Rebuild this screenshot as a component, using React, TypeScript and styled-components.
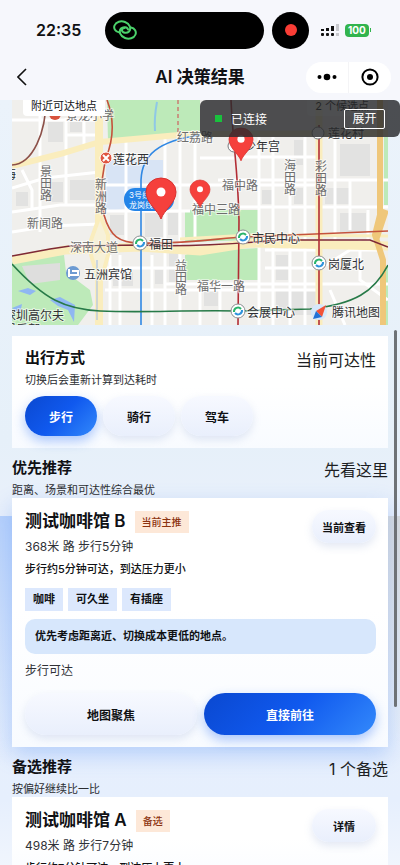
import React, { useState } from "react";
import styled, { createGlobalStyle, css } from "styled-components";

const GlobalStyle = createGlobalStyle`
  * { box-sizing: border-box; }
  body {
    margin: 0;
    color: #101114;
    font-family: Inter, "Noto Sans CJK SC", sans-serif;
    -webkit-font-smoothing: antialiased;
  }
  button { font-family: inherit; cursor: pointer; }
  h1, h2, h3, p, ul { margin: 0; padding: 0; }
`;

const Screen = styled.div`
  position: relative;
  display: flex;
  flex-direction: column;
  height: 100vh;
  overflow: hidden;
  background: #ebf3fb;
`;

const Header = styled.header`
  flex: none;
  background: #f6f7fc;
`;

const StatusBar = styled.div`
  display: grid;
  grid-template-columns: 105fr 159px 136fr;
  align-items: center;
  height: 60px;
`;

const Clock = styled.time`
  padding-left: 36px;
  font-size: 16px;
  font-weight: 600;
`;

const Island = styled.div`
  display: flex;
  align-items: center;
  height: 37px;
  padding-left: 8px;
  border-radius: 19px;
  background: #000;
`;

const StatusRight = styled.div`
  display: flex;
  align-items: center;
  padding-left: 8px;
`;

const Recording = styled.span`
  display: grid;
  place-items: center;
  width: 37px;
  height: 37px;
  border-radius: 50%;
  background: #000;
  &::after {
    content: "";
    width: 12px;
    height: 12px;
    border-radius: 50%;
    background: #fa3d35;
  }
`;

const Signal = styled.svg`
  width: 19px;
  height: 13px;
  margin-left: 12px;
`;

const Battery = styled.span`
  display: flex;
  align-items: center;
  margin-left: 5px;
  height: 13px;
  padding: 0 3px;
  border-radius: 4px;
  background: #32b44e;
  color: #fff;
  font-size: 10px;
  font-weight: 700;
`;

const BatteryCap = styled.span`
  width: 1px;
  height: 4px;
  margin-left: 1px;
  background: #32b44e;
`;

const NavBar = styled.div`
  display: grid;
  grid-template-columns: 1fr auto 1fr;
  align-items: center;
  height: 40px;
  padding: 0 9px 6px;
`;

const IconButton = styled.button`
  display: grid;
  place-items: center;
  width: 26px;
  height: 24px;
  padding: 0;
  border: 0;
  background: none;
`;

const NavTitle = styled.h1`
  font-size: 17px;
  line-height: 24px;
  font-weight: 600;
`;

const Capsule = styled.div`
  justify-self: end;
  display: flex;
  width: 85px;
  height: 31px;
  border-radius: 16px;
  background: #fff;
  button {
    flex: 1;
    height: 31px;
  }
  button + button {
    border-left: 1px solid #f4f4f6;
  }
`;

const Content = styled.main`
  flex: 1;
  min-height: 0;
  overflow: hidden;
  padding: 0 12px;
  background:
    linear-gradient(#b7d1fb, #b7d1fb00) left 416px / 12px 250px no-repeat,
    linear-gradient(#d9dbdc, #d9dbdc00) right 416px / 12px 230px no-repeat,
    linear-gradient(#ebf3fb 0, #e6f0f9 340px, #e9f0fb 416px, #e6effd 700px, #f0f5fd 765px);
`;

const MapBox = styled.section`
  position: relative;
  overflow: hidden;
  height: 225px;
  margin-bottom: 11px;
  svg {
    display: block;
    width: 100%;
    height: 100%;
  }
`;

const MapChip = styled.span<{ $side: "left" | "right" }>`
  position: absolute;
  top: -4px;
  ${(p) => (p.$side === "left" ? "left: 11px;" : "right: 11px;")}
  padding: 0 8px;
  border-radius: 4px;
  background: ${(p) => (p.$side === "left" ? "#fff" : "rgba(255, 255, 255, 0.5)")};
  font-size: 11px;
  line-height: 20px;
`;

const Toast = styled.div`
  position: absolute;
  top: 100px;
  right: 0;
  display: flex;
  align-items: center;
  width: 50%;
  height: 37px;
  padding: 0 15px;
  border-radius: 6px;
  background: rgba(40, 42, 44, 0.82);
  color: #fff;
  font-size: 12px;
`;

const ToastDot = styled.span`
  width: 7px;
  height: 7px;
  margin-right: 9px;
  background: #19c13d;
`;

const ToastButton = styled.button`
  width: 41px;
  height: 20px;
  margin-left: auto;
  padding: 0;
  border: 1px solid #fff;
  border-radius: 2px;
  background: none;
  color: #fff;
  font-size: 12px;
  line-height: 16px;
`;

const ScrollThumb = styled.div`
  position: absolute;
  top: 330px;
  right: 3px;
  width: 3px;
  height: 377px;
  border-radius: 2px;
  background: #6e7276;
`;

const Card = styled.article<{ $glow?: boolean }>`
  padding: 12px 12px 12px 13px;
  background: linear-gradient(#fff 0, #fff 45%, #f8fbff 100%);
  ${(p) =>
    p.$glow &&
    css`
      box-shadow: 0 8px 20px rgba(77, 139, 245, 0.32);
    `}
`;

const Heading = styled.div`
  display: flex;
  justify-content: space-between;
  align-items: flex-start;
`;

const SectionHeading = styled(Heading)`
  position: relative;
  padding-top: 10px;
  height: 50px;
`;

const SectionTitle = styled.h2`
  font-size: 15px;
  line-height: 20px;
  font-weight: 600;
`;

const SectionNote = styled.p`
  font-size: 11px;
  line-height: 16px;
  margin-top: 4px;
  color: #2b2d31;
`;

const SectionSide = styled.span`
  font-size: 16px;
  line-height: 24px;
  color: #1d1f23;
`;

const Modes = styled.div`
  display: flex;
  gap: 6px;
  margin-top: 8px;
`;

const Pill = styled.button<{ $primary?: boolean; $size?: "small" | "mode" | "wide" }>`
  border: 0;
  padding: 0;
  border-radius: 21px;
  font-weight: 600;
  font-size: 12px;
  color: #101114;
  background: linear-gradient(#f7f9ff, #e9effc);
  box-shadow: 0 4px 8px rgba(120, 145, 200, 0.2);
  ${(p) => p.$size === "mode" && "width: 72px; height: 40px;"}
  ${(p) => p.$size === "wide" && "flex: 1; height: 42px;"}
  ${(p) => p.$size === "small" && "flex: none; width: 64px; height: 33px; font-size: 11px;"}
  ${(p) =>
    p.$primary &&
    css`
      color: #fff;
      background: linear-gradient(135deg, #0a48d0 0%, #1059ee 50%, #3389fb 100%);
      box-shadow: 0 5px 12px rgba(40, 110, 245, 0.38);
    `}
`;

const PlaceHead = styled.div`
  display: flex;
  justify-content: space-between;
  height: 27px;
`;

const PlaceName = styled.div`
  display: flex;
  align-items: center;
  gap: 9px;
  height: 23px;
`;

const PlaceTitle = styled.h3`
  font-size: 17px;
  line-height: 23px;
  font-weight: 600;
`;

const Badge = styled.span`
  padding: 0 7px;
  background: #fde8d8;
  color: #8c3310;
  font-size: 10px;
  line-height: 22px;
  font-weight: 500;
`;

const Meta = styled.p`
  font-size: 12px;
  line-height: 20px;
  color: #303237;
`;

const Reason = styled.p`
  margin-top: 3px;
  font-size: 11px;
  line-height: 18px;
  font-weight: 500;
`;

const Tags = styled.ul`
  display: flex;
  gap: 5px;
  margin-top: 10px;
  list-style: none;
`;

const Tag = styled.li`
  padding: 0 8px;
  background: #dce8fd;
  font-size: 11px;
  line-height: 23px;
  font-weight: 600;
`;

const Tip = styled.p`
  margin: 8px 0 7px;
  padding: 0 10px;
  border-radius: 10px;
  background: #d7e7fc;
  font-size: 11px;
  line-height: 35px;
  font-weight: 600;
`;

const Actions = styled.div`
  display: flex;
  gap: 7px;
  margin-top: 12px;
`;

const roads = [
  "M12 120H100", "M12 188L45 178L100 172", "M12 212L60 205H105", "M40 115V232", "M66 118V205",
  "M84 118V150", "M66 135H98", "M12 232L50 226L100 224", "M22 170L32 190V210", "M105 185H320",
  "M105 211H190", "M126 140V240", "M165 135V325", "M180 135V325", "M195 135V240",
  "M259 137V325", "M273 137V325", "M290 170V325", "M305 137V325", "M200 158H235", "M239 157H320",
  "M218 180H388", "M240 207H388", "M335 137V240", "M350 180V230", "M368 210V240",
  "M105 268H185", "M105 290H320", "M165 284H388", "M265 250H320",
  "M265 268H320", "M326 265L350 250H380", "M330 290L345 325", "M360 240V280L388 300",
  "M110 255V325", "M120 255V325", "M152 255V325", "M200 284V325", "M220 284V325",
];

const blocks = [
  [48, 122, 15, 20], [70, 122, 12, 10], [48, 182, 15, 20], [70, 180, 26, 20], [16, 192, 12, 14],
  [110, 215, 14, 20], [145, 213, 18, 24], [168, 213, 10, 22], [169, 252, 9, 30], [155, 270, 8, 14],
  [276, 255, 12, 25], [276, 289, 44, 26], [262, 190, 10, 14], [294, 188, 9, 16], [325, 188, 24, 16],
  [340, 213, 26, 20], [340, 144, 30, 32], [294, 140, 9, 25], [204, 290, 14, 16], [113, 272, 20, 14],
];

type Station = { x: number; y: number; name: string };
const stations: Station[] = [
  { x: 140, y: 243, name: "福田" },
  { x: 243, y: 237, name: "市民中心" },
  { x: 319, y: 263, name: "岗厦北" },
  { x: 238, y: 311, name: "会展中心" },
];

const MapText = styled.text<{ $road?: boolean; $vertical?: boolean }>`
  font-size: 12px;
  fill: ${(p) => (p.$road ? "#6d6d6d" : "#2f3033")};
  stroke: #fff;
  stroke-width: 2px;
  stroke-opacity: 0.6;
  paint-order: stroke;
  ${(p) => p.$vertical && "writing-mode: vertical-rl; text-orientation: upright;"}
`;

const LineText = styled.text`
  font-size: 8px;
  fill: #fff;
`;

function Pin({ x, y, r }: { x: number; y: number; r: number }) {
  const k = r / 15;
  return (
    <g transform={`translate(${x} ${y}) scale(${k})`}>
      <path d="M0 41C-3 32-15 25-15 14A15 14 0 0 1 15 14C15 25 3 32 0 41Z" fill="#f5403c" stroke="#d9302d" strokeWidth="1" />
      <circle cx="0" cy="14" r="4.5" fill="#fff" />
    </g>
  );
}

function CityMap() {
  return (
    <svg viewBox="12 100 376 225" preserveAspectRatio="xMidYMid slice" role="img" aria-label="附近可达地点地图">
      <rect x="12" y="100" width="376" height="225" fill="#f0efec" />
      <path d="M107 100H200V134L160 138L108 141Z" fill="#bdeab9" />
      <path d="M106 160H163V205L106 211Z" fill="#d8e4f5" />
      <path d="M185 210H259V240L185 242ZM196 251L259 248V280H185V255Z" fill="#bdeab9" />
      <path d="M12 262L30 257L64 255L66 272L90 290L93 305L78 325H12Z" fill="#bdeab9" />
      <path d="M22 266L60 263V280L30 284Z" fill="#dededd" />
      <path d="M384 137H388V205H384ZM384 270L388 266V325H384Z" fill="#bdeab9" />
      <path d="M18 291L28 288L36 291L30 295ZM50 300L60 297L75 305L74 322L68 310L58 306ZM12 308L22 304L20 314Z" fill="#8fb7f2" />
      <path d="M157 102Q154 118 155 131" fill="none" stroke="#8fc8e6" strokeWidth="2" />
      {blocks.map(([x, y, w, h]) => (
        <rect key={`${x}-${y}`} x={x} y={y} width={w} height={h} fill="#e2e2e1" />
      ))}
      <g fill="none" stroke="#fff" strokeWidth="3">
        {roads.map((d) => (
          <path key={d} d={d} />
        ))}
      </g>
      <g fill="none" stroke="#faedbd">
        <path d="M12 166L60 154L100 142L190 134L388 133" strokeWidth="6" />
        <path d="M99 100V325" strokeWidth="8" />
        <path d="M100 215L91 240V255L100 285L108 255V235Z" strokeWidth="4" fill="#f7f1d8" />
        <path d="M12 260L65 250L140 247L200 251L250 243L388 246" strokeWidth="9" />
        <path d="M180 239L250 235L388 236" strokeWidth="3" />
        <path d="M319 100V325" strokeWidth="7" />
      </g>
      <path d="M380 100V215L375 235L383 260V325M386 210L376 240" fill="none" stroke="#efc77a" strokeWidth="6" />
      <path d="M97 260V320" stroke="#9fbbe8" strokeWidth="1" />
      <g fill="none" strokeWidth="1.6">
        <path d="M46 100C46 132 33 164 12 165" stroke="#8c5048" />
        <path d="M107 100C114 118 114 138 106 158C101 180 100 200 104 215C110 236 119 243 140 243C190 244 220 238 243 237L388 231" stroke="#c5533c" />
        <path d="M12 256L50 249L70 246L140 245C180 247 235 244 280 240H370L388 247" stroke="#7e2936" />
        <path d="M178 100L178 132" stroke="#c98476" strokeDasharray="4 3" />
        <path d="M200 135C158 141 142 155 141 180V325" stroke="#3088e4" />
        <path d="M231 100C233 145 238 170 239 220L238 325" stroke="#b22d35" />
        <path d="M319 125V325" stroke="#b22d35" />
        <path d="M12 264C45 300 65 309 100 311C145 313 180 310 238 311L310 309C355 304 374 292 388 265" stroke="#277a48" />
      </g>
      <rect x="124" y="188" width="50" height="23" rx="11" fill="#2384e8" />
      <LineText x="129" y="198">3号线</LineText>
      <LineText x="129" y="208">龙岗线</LineText>
      <circle cx="55" cy="114" r="6" fill="#d8523c" />
      <MapText x="66" y="120" $road>景龙小学</MapText>
      <circle cx="106" cy="158" r="6" fill="#df5540" stroke="#fff" />
      <path d="M103 155l6 6m0-6l-6 6" stroke="#fff" strokeWidth="2" />
      <MapText x="113" y="164">莲花西</MapText>
      <MapText x="177" y="142" $road>红荔路</MapText>
      <MapText x="45" y="165" $road $vertical>景田路</MapText>
      <MapText x="100" y="178" $road $vertical>新洲路</MapText>
      <MapText x="289" y="159" $road $vertical>海田路</MapText>
      <MapText x="320" y="160" $road $vertical>彩田路</MapText>
      <MapText x="180" y="259" $road $vertical>益田路</MapText>
      <MapText x="27" y="228" $road>新闻路</MapText>
      <MapText x="70" y="252" $road>深南大道</MapText>
      <MapText x="222" y="190" $road>福中路</MapText>
      <MapText x="192" y="214" $road>福中三路</MapText>
      <MapText x="197" y="291" $road>福华一路</MapText>
      <circle cx="73" cy="273" r="7" fill="#6d9bd2" />
      <path d="M69 277V269M69 275H78V271H72" fill="none" stroke="#fff" strokeWidth="2" />
      <MapText x="84" y="279">五洲宾馆</MapText>
      <MapText x="4" y="320">深圳高尔夫</MapText>
      <MapText x="4" y="334">俱乐部</MapText>
      <MapText x="4" y="179">海</MapText>
      {stations.map((s) => (
        <g key={s.name}>
          <circle cx={s.x} cy={s.y} r="7" fill="#fff" stroke="#8b8f92" />
          <path d={`M${s.x - 4} ${s.y + 1}a4 4 0 0 1 7-3`} fill="none" stroke="#29b46c" strokeWidth="2" />
          <path d={`M${s.x + 4} ${s.y - 1}a4 4 0 0 1-7 3`} fill="none" stroke="#2e93dc" strokeWidth="2" />
          <MapText x={s.x + 9} y={s.y + 6}>{s.name}</MapText>
        </g>
      ))}
      <circle cx="234" cy="146" r="6" fill="#fff" stroke="#777b80" />
      <MapText x="244" y="151">少年宫</MapText>
      <circle cx="318" cy="133" r="6" fill="#fff" stroke="#777b80" />
      <MapText x="328" y="138">莲花村</MapText>
      <Pin x={161} y={178} r={15} />
      <Pin x={200} y={180} r={10} />
      <Pin x={241} y={128} r={12} />
      <circle cx="319" cy="312" r="8" fill="#d5e8fb" />
      <path d="M326 305L322 317L316 311Z" fill="#f25338" />
      <path d="M313 319L316 311L322 317Z" fill="#2372d5" />
      <MapText x="332" y="317">腾讯地图</MapText>
    </svg>
  );
}

type PlaceProps = {
  name: string;
  badge: string;
  action: string;
  meta: string;
  reason: string;
  glow?: boolean;
  children?: React.ReactNode;
};

function Place({ name, badge, action, meta, reason, glow, children }: PlaceProps) {
  return (
    <Card $glow={glow}>
      <PlaceHead>
        <PlaceName>
          <PlaceTitle>{name}</PlaceTitle>
          <Badge>{badge}</Badge>
        </PlaceName>
        <Pill $size="small">{action}</Pill>
      </PlaceHead>
      <Meta>{meta}</Meta>
      <Reason>{reason}</Reason>
      {children}
    </Card>
  );
}

const modes = ["步行", "骑行", "驾车"];

export default function App() {
  const [mode, setMode] = useState(modes[0]);
  return (
    <>
      <GlobalStyle />
      <Screen>
        <Header>
          <StatusBar>
            <Clock>22:35</Clock>
            <Island>
              <svg width="24" height="20" viewBox="0 0 24 20" fill="none" stroke="#4bd26b" strokeWidth="2" strokeLinecap="round" aria-hidden="true">
                <path d="M6.500 12.500C2 12 .5 8 1.500 5.500C3 1.500 8 .5 12 2C17 4 18.500 8.500 16 11.500C14 13.500 9.500 13 9 10.500C8.700 9 10 8 11.500 8" />
                <path d="M18 7.500C22 8 23.500 12 22.500 14.500C21 18.500 16 19.500 12 18C7 16 5.500 11.500 8 8.500C10 6.500 14.500 7 15 9.500" />
              </svg>
            </Island>
            <StatusRight>
              <Recording />
              <Signal viewBox="0 0 19 13" aria-hidden="true">
                <g fill="#111">
                  <rect x="0" y="9" width="3" height="3" rx="1" />
                  <rect x="5" y="9" width="3" height="3" rx="1" />
                  <rect x="10" y="9" width="3" height="3" rx="1" />
                  <rect x="0" y="5" width="3" height="2" />
                  <rect x="5" y="4" width="3" height="3" />
                  <rect x="10" y="2" width="3" height="5" />
                </g>
                <path d="M15 9h3v3h-3zM15 0h3v7h-3z" fill="#c8c9ce" />
              </Signal>
              <Battery>100</Battery>
              <BatteryCap />
            </StatusRight>
          </StatusBar>
          <NavBar>
            <IconButton aria-label="返回">
              <svg width="10" height="18" viewBox="0 0 10 18" fill="none" stroke="#111" strokeWidth="1.6">
                <path d="M9 1L1 9l8 8" />
              </svg>
            </IconButton>
            <NavTitle>AI 决策结果</NavTitle>
            <Capsule>
              <IconButton aria-label="更多">
                <svg width="20" height="8" viewBox="0 0 20 8" fill="#000">
                  <circle cx="2.5" cy="4" r="2" />
                  <circle cx="10" cy="4" r="3.3" />
                  <circle cx="17.5" cy="4" r="2" />
                </svg>
              </IconButton>
              <IconButton aria-label="关闭">
                <svg width="18" height="18" viewBox="0 0 18 18">
                  <circle cx="9" cy="9" r="7.6" fill="none" stroke="#000" strokeWidth="2" />
                  <circle cx="9" cy="9" r="3" />
                </svg>
              </IconButton>
            </Capsule>
          </NavBar>
        </Header>

        <Content>
          <MapBox>
            <CityMap />
            <MapChip $side="left">附近可达地点</MapChip>
            <MapChip $side="right">2 个候选点</MapChip>
          </MapBox>

          <Card>
            <Heading>
              <div>
                <SectionTitle>出行方式</SectionTitle>
                <SectionNote>切换后会重新计算到达耗时</SectionNote>
              </div>
              <SectionSide>当前可达性</SectionSide>
            </Heading>
            <Modes>
              {modes.map((m) => (
                <Pill key={m} $size="mode" $primary={m === mode} aria-pressed={m === mode} onClick={() => setMode(m)}>
                  {m}
                </Pill>
              ))}
            </Modes>
          </Card>

          <SectionHeading>
            <div>
              <SectionTitle>优先推荐</SectionTitle>
              <SectionNote>距离、场景和可达性综合最优</SectionNote>
            </div>
            <SectionSide>先看这里</SectionSide>
          </SectionHeading>
          <Place
            glow
            name="测试咖啡馆 B"
            badge="当前主推"
            action="当前查看"
            meta="368米 路 步行5分钟"
            reason="步行约5分钟可达，到达压力更小"
          >
            <Tags>
              <Tag>咖啡</Tag>
              <Tag>可久坐</Tag>
              <Tag>有插座</Tag>
            </Tags>
            <Tip>优先考虑距离近、切换成本更低的地点。</Tip>
            <Meta>步行可达</Meta>
            <Actions>
              <Pill $size="wide">地图聚焦</Pill>
              <Pill $size="wide" $primary>直接前往</Pill>
            </Actions>
          </Place>

          <SectionHeading>
            <div>
              <SectionTitle>备选推荐</SectionTitle>
              <SectionNote>按偏好继续比一比</SectionNote>
            </div>
            <SectionSide>1 个备选</SectionSide>
          </SectionHeading>
          <Place
            name="测试咖啡馆 A"
            badge="备选"
            action="详情"
            meta="498米 路 步行7分钟"
            reason="步行约7分钟可达，到达压力更小"
          />
        </Content>
        <Toast role="status">
          <ToastDot />
          已连接
          <ToastButton>展开</ToastButton>
        </Toast>
        <ScrollThumb />
      </Screen>
    </>
  );
}
